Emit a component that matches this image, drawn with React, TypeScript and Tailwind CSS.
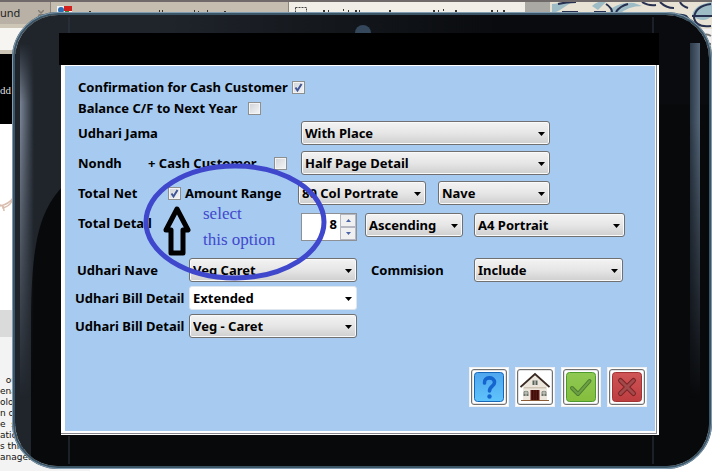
import type { ReactNode } from "react";

const selectFace =
  "block h-6 w-full appearance-none rounded-[3px] border py-0 pl-[3px] pr-5 outline-none";

function Combo({
  id,
  label,
  value,
  width,
  plain = false,
}: {
  id: string;
  label?: string;
  value: string;
  width: string;
  plain?: boolean;
}) {
  return (
    <div className={`relative shrink-0 ${width}`}>
      <select
        id={id}
        aria-label={label}
        defaultValue={value}
        className={
          plain
            ? `${selectFace} border-[#dfe6ee] bg-white`
            : `${selectFace} border-[#707070] bg-linear-to-b from-[#f3f3f3] from-0% via-[#e6e6e6] via-50% to-[#cfcfcf] shadow-[inset_0_0_0_1px_#fafafa]`
        }
      >
        <option>{value}</option>
      </select>
      <svg
        className="pointer-events-none absolute top-[11px] right-[5px]"
        width="7"
        height="4"
        viewBox="0 0 7 4"
        aria-hidden="true"
      >
        <path d="M0 0h7L3.5 4z" fill="#000" />
      </svg>
    </div>
  );
}

function Tick({ id, label, checked = false }: { id: string; label?: string; checked?: boolean }) {
  return (
    <span className="relative block size-[13px] shrink-0">
      <input
        id={id}
        aria-label={label}
        type="checkbox"
        defaultChecked={checked}
        className="peer block size-[13px] appearance-none border border-[#8e8f8f] bg-linear-to-br from-[#cfd3d8] to-[#f6f6f6] shadow-[inset_0_0_0_1px_#f4f4f4]"
      />
      <svg
        className="pointer-events-none absolute inset-0 hidden peer-checked:block"
        width="13"
        height="13"
        viewBox="0 0 13 13"
        aria-hidden="true"
      >
        <path d="M3.5 6.5l2 3L9.5 3" fill="none" stroke="#3f5598" strokeWidth="2" />
      </svg>
    </span>
  );
}

function Action({ name, children }: { name: string; children: ReactNode }) {
  return (
    <button
      type="button"
      aria-label={name}
      className="flex size-10 items-center justify-center border border-[#f0f0f0] bg-white"
    >
      <span className="flex size-9 items-center justify-center rounded-[3px] border border-[#707070] bg-[#e2e2e2]">
        <span className="flex size-8 items-center justify-center bg-white">{children}</span>
      </span>
    </button>
  );
}

function HelpIcon() {
  return (
    <svg width="30" height="30" viewBox="0 0 30 30">
      <defs>
        <linearGradient id="help-fill" x1="0" y1="0" x2="0" y2="1">
          <stop offset="0" stopColor="#4fa6ee" />
          <stop offset="1" stopColor="#5fc4fb" />
        </linearGradient>
      </defs>
      <rect x="0.5" y="0.5" width="29" height="29" rx="3" fill="url(#help-fill)" stroke="#1667b8" />
      <path
        d="M10.5 11C9.500 4.500 20.500 4 20.500 10.500C20.500 14.500 15.500 14 15.500 19"
        fill="none"
        stroke="#1565cf"
        strokeWidth="3.600"
        strokeLinecap="round"
      />
      <circle cx="15.500" cy="24.500" r="2.200" fill="#1565cf" />
    </svg>
  );
}

function HomeIcon() {
  return (
    <svg width="30" height="30" viewBox="0 0 30 30">
      <path d="M3 14L15 3l12 11v14H3z" fill="#ece6dc" />
      <path d="M4 15h22v1.500H4z" fill="#d0c5b5" />
      <path d="M0.500 15L15 2l14.500 13" fill="none" stroke="#3a2a22" strokeWidth="1.800" />
      <rect x="12.500" y="8.500" width="5" height="4.500" fill="#59645c" />
      <path d="M15 8.500v4.500" stroke="#e8e4da" />
      <rect x="10.500" y="18" width="9" height="10.500" fill="#5a1712" />
      <path d="M12.500 18v10M15 18v10M17.500 18v10" stroke="#2d0b09" strokeWidth="0.800" />
      <path d="M3.500 24v-4q2.500-2.500 5 0v4zM21.500 24v-4q2.500-2.500 5 0v4z" fill="#6b756c" />
      <path d="M6 18v6M24 18v6M3.500 21h5M21.500 21h5" stroke="#e6e2d8" strokeWidth="0.800" />
      <path d="M1 28.500h28" stroke="#8b5a34" strokeWidth="1.200" />
    </svg>
  );
}

function AcceptIcon() {
  return (
    <svg width="30" height="30" viewBox="0 0 30 30">
      <defs>
        <linearGradient id="accept-fill" x1="0" y1="0" x2="0" y2="1">
          <stop offset="0" stopColor="#8fc954" />
          <stop offset="1" stopColor="#85bd3c" />
        </linearGradient>
      </defs>
      <rect x="0.500" y="0.500" width="29" height="29" rx="3" fill="url(#accept-fill)" stroke="#4c9a2b" />
      <path d="M6 16l6 6L23.500 9" fill="none" stroke="#4a7d2e" strokeWidth="4" strokeLinecap="round" strokeLinejoin="round" />
      <path d="M6 16l6 6L23.500 9" fill="none" stroke="#6f9f45" strokeWidth="2" strokeLinecap="round" strokeLinejoin="round" />
    </svg>
  );
}

function CancelIcon() {
  return (
    <svg width="30" height="30" viewBox="0 0 30 30">
      <defs>
        <linearGradient id="cancel-fill" x1="0" y1="0" x2="0" y2="1">
          <stop offset="0" stopColor="#cf5557" />
          <stop offset="1" stopColor="#bd3d3f" />
        </linearGradient>
      </defs>
      <rect x="0.500" y="0.500" width="29" height="29" rx="3" fill="url(#cancel-fill)" stroke="#a13335" />
      <path d="M8.500 8.500l13 13M21.500 8.500l-13 13" stroke="#7f2226" strokeWidth="5" strokeLinecap="round" />
      <path d="M8.500 8.500l13 13M21.500 8.500l-13 13" stroke="#a04a4c" strokeWidth="3" strokeLinecap="round" />
    </svg>
  );
}

/* Browser window that is partly visible behind the tablet. */
function BrowserBehind() {
  return (
    <div className="absolute inset-0 flex flex-col overflow-hidden bg-white">
      <div className="h-[2px] shrink-0 bg-[#6f6a69]" />
      <div className="flex h-[22px] shrink-0 bg-[#c3baab]">
        <div className="flex w-[51px] items-center justify-between border-r border-[#8d857a] bg-[#b9b1a5] pr-[6px] text-[11px] text-[#222]">
          <span>und</span>
          <svg width="6" height="6" viewBox="0 0 6 6" aria-hidden="true">
            <path d="M0 0l6 6M6 0L0 6" stroke="#857e74" strokeWidth="1.500" />
          </svg>
        </div>
        <div className="w-[238px] border-r border-[#8d857a] bg-[#c5beb0] pt-1 pl-[6px]">
          <svg width="180" height="10" viewBox="0 0 180 10" aria-hidden="true">
            <rect width="15" height="10" fill="#f4f4f4" />
            <circle cx="4" cy="4" r="3" fill="#2c6fb5" />
            <path d="M7 0h8v5H7z" fill="#d3211d" />
            <path d="M8 5h4v4H8z" fill="#3d8c3a" />
            <path d="M32 6h2M102 5h1M105 5h1M137 5h1M141 6h1M150 5h1M167 6h2" stroke="#333" strokeWidth="2" />
          </svg>
        </div>
        <div className="w-[236px] bg-[#f1eee8] pt-[5px] pl-[6px]">
          <svg width="220" height="12" viewBox="0 0 220 12" aria-hidden="true">
            <rect x="0.500" y="0.500" width="11" height="11" fill="none" stroke="#444" strokeDasharray="2 1" />
            <path d="M28 4h2M33 4h1M48 3h1M53 4h1M60 4h2M64 4h1M94 4h2M138 4h2M143 4h1M148 3h1M160 4h2M196 4h2M202 4h1M208 4h2" stroke="#333" strokeWidth="2" />
          </svg>
        </div>
        <div className="w-[25px] bg-[#aaa9a4]" />
        <div className="grow bg-[#e5e0d2]" />
      </div>
      <div className="h-[30px] shrink-0 border-y-4 border-[#cdc5b6] bg-[#f6f5f2]" />
      <div className="flex h-[70px] shrink-0">
        <div className="w-[52px] bg-black pt-[28px] font-['Liberation_Serif',serif] text-[11px] leading-4 text-[#ddd]">
          dd
        </div>
      </div>
      <div className="h-[186px] shrink-0 bg-white pt-[74px]">
        <svg width="14" height="18" viewBox="0 0 14 18" aria-hidden="true">
          <path d="M13 0Q9 6 0 8M12 3Q9 9 2 10M0 7q4 0 4 6" fill="none" stroke="#d9bdae" strokeWidth="1.500" />
        </svg>
      </div>
      <div className="flex grow">
        <div className="w-[90px] bg-[#f3f3f3] font-['DejaVu_Sans',sans-serif] text-[9px] leading-[11px] whitespace-pre text-[#111]">
          <div className="mb-[38px] h-[27px] bg-[#dadada]" />
          <p>{"  ou"}</p>
          <p>ena</p>
          <p>olo</p>
          <p>n o</p>
          <p>{"e  s"}</p>
          <p>ation</p>
          <p>{"s thru"}</p>
          <p>anager</p>
        </div>
      </div>
    </div>
  );
}

/* Patterned wallpaper of the top right corner. */
function Wallpaper() {
  return (
    <svg className="absolute top-[2px] right-0" width="160" height="60" viewBox="20 0 160 60" aria-hidden="true">
      <rect x="20" width="160" height="60" fill="#e7e2d4" />
      <g fill="#9dbcc6">
        <path d="M20 2l20-2-12 8-8 4zM80 6q10-6 22-5l8 3q-14 0-22 8l-12 1z" />
        <path d="M138 18q8-10 18-4l2 10zM160 14q2-12 20-14v14q-8 8-20 0zM60 4q6-6 14-4l-8 8z" />
      </g>
      <g fill="none" stroke="#27304f" strokeWidth="2">
        <path d="M26 2q8-2 18-2M74 2q6 4 6 8M96 2q-8 2-12 8M128 0q6 6 14 6M138 18q6-8 16-4q4 4 4 10" />
        <path d="M179 2q-16 2-17 14q2 10 17 8M160 14h20M30 10h16M62 10h12" />
        <path d="M110 0q6 4 14 3M148 0q2 4 8 6" />
      </g>
      <rect x="156" y="27" width="24" height="18" fill="#f1f0ee" />
      <path d="M179 34q-6-4-8 2t8 6" fill="none" stroke="#777" strokeWidth="2" />
    </svg>
  );
}

/* Glass reflections on the tablet bezel. */
function Gloss() {
  return (
    <>
      <div className="absolute inset-0 bg-linear-to-r from-[#20252c] from-20% to-[#090b0e] to-70%" />
      <svg className="absolute inset-0 size-full" preserveAspectRatio="none" viewBox="0 0 694 452" aria-hidden="true">
        <path d="M16 452V300C17 230 24 200 44 176L120 90H694V452z" fill="#08090b" />
        <path d="M54 2v20M54 422v28" stroke="#303944" strokeWidth="1" />
        <path d="M638 2v20M638 422v28" stroke="#303944" strokeWidth="1" />
        <circle cx="348" cy="18" r="8" fill="#34475b" />
      </svg>
      <div className="absolute inset-y-7 left-[5px] w-[14px] bg-linear-to-r from-[#778293] to-transparent mask-t-from-85% mask-b-from-20% mask-b-to-90%" />
      <div className="absolute inset-y-7 right-[9px] w-[10px] bg-linear-to-r from-[#2c3947] to-[#56677a] mask-b-from-20% mask-b-to-90%" />
    </>
  );
}

/* Hand-drawn remark over the form. */
function Remark() {
  return (
    <div className="pointer-events-none absolute top-[97px] left-[78px] h-[121px] w-[186px] font-['Liberation_Serif',serif] text-[17px] leading-[26px] font-normal text-[#3f48cc]">
      <svg className="absolute inset-0" width="186" height="121" viewBox="0 0 186 121" aria-hidden="true">
        <ellipse cx="92" cy="59" rx="89" ry="56" fill="none" stroke="#3f48cc" strokeWidth="5" />
        <path
          d="M34 46L45 67H40V90H28V67H23z"
          fill="none"
          stroke="#000"
          strokeWidth="5"
          strokeLinejoin="round"
        />
      </svg>
      <p className="pt-[38px] pl-[60px]">
        select
        <br />
        this option
      </p>
    </div>
  );
}

export default function App() {
  return (
    <div className="relative min-h-screen overflow-hidden font-['Noto_Sans','DejaVu_Sans',sans-serif]">
      <BrowserBehind />
      <Wallpaper />
      <div className="relative mt-3 ml-3 overflow-hidden rounded-[46px] border-[3px] border-[#3c5566] pt-[18px] pr-[50px] pb-[31px] pl-11 outline-1 -outline-offset-1 outline-[#7f9bb0]">
        <Gloss />
        <div className="relative h-8 bg-black" />
        <div className="relative ml-[2px] bg-white pr-[2px] pb-px">
          <div className="border-r border-b border-[#85878c]">
            <form
              className="relative border-t border-r border-b-2 border-l-4 border-white bg-[#a6caf0] text-[13px] leading-4 font-bold text-black"
              onSubmit={(event) => event.preventDefault()}
            >
              <div className="flex flex-col pt-[13px] pr-2 pb-6 pl-[13px]">
                <div className="flex items-center">
                  <label htmlFor="confirm" className="w-[214px] whitespace-nowrap">Confirmation for Cash Customer</label>
                  <Tick id="confirm" checked />
                </div>
                <div className="mt-[5px] flex items-center">
                  <label htmlFor="balance" className="w-[170px] whitespace-nowrap">Balance C/F to Next Year</label>
                  <Tick id="balance" />
                </div>
                <div className="mt-[5px] flex items-center">
                  <label htmlFor="jama" className="w-[223px]">Udhari Jama</label>
                  <Combo id="jama" value="With Place" width="w-[249px]" />
                </div>
                <div className="mt-[6px] flex items-center">
                  <label htmlFor="nondh" className="w-[70px]">Nondh</label>
                  <label htmlFor="cash" className="w-[126px]">+ Cash Customer</label>
                  <div className="w-[27px]">
                    <Tick id="cash" />
                  </div>
                  <Combo id="nondh" value="Half Page Detail" width="w-[249px]" />
                </div>
                <div className="mt-[6px] flex items-center">
                  <label htmlFor="net" className="w-[90px]">Total Net</label>
                  <Tick id="range" checked />
                  <label htmlFor="range" className="w-[117px] pl-1">Amount Range</label>
                  <Combo id="net" value="80 Col Portrate" width="w-32" />
                  <div className="w-3" />
                  <Combo id="netside" label="Net side" value="Nave" width="w-28" />
                </div>
                <div className="mt-2 flex items-start">
                  <label htmlFor="detail" className="w-[223px] pt-[2px]">Total Detail</label>
                  <div className="flex h-7 w-14 border border-[#8d9095] bg-white">
                    <input
                      id="detail"
                      type="text"
                      defaultValue="8"
                      className="h-5 w-[38px] min-w-0 bg-white pr-[3px] text-right outline-none"
                    />
                    <div className="flex w-4 flex-col bg-[#f0f0f0]">
                      <button type="button" aria-label="Increase" className="flex flex-1 items-center justify-center border border-[#b5b8c2]">
                        <svg width="5" height="3" viewBox="0 0 5 3"><path d="M0 3h5L2.500 0z" fill="#4b63a8" /></svg>
                      </button>
                      <button type="button" aria-label="Decrease" className="flex flex-1 items-center justify-center border border-[#b5b8c2]">
                        <svg width="5" height="3" viewBox="0 0 5 3"><path d="M0 0h5L2.500 3z" fill="#4b63a8" /></svg>
                      </button>
                    </div>
                  </div>
                  <div className="w-2" />
                  <Combo id="order" label="Order" value="Ascending" width="w-[98px]" />
                  <div className="w-[11px]" />
                  <Combo id="paper" label="Paper" value="A4 Portrait" width="w-[151px]" />
                </div>
                <div className="mt-[17px] -ml-px flex items-center">
                  <label htmlFor="nave" className="w-28">Udhari Nave</label>
                  <Combo id="nave" value="Veg Caret" width="w-[168px]" />
                  <label htmlFor="commision" className="w-[117px] pl-[14px]">Commision</label>
                  <Combo id="commision" value="Include" width="w-[149px]" />
                </div>
                <div className="mt-1 -ml-[3px] flex items-center">
                  <label htmlFor="bill" className="w-[114px]">Udhari Bill Detail</label>
                  <Combo id="bill" value="Extended" width="w-[168px]" plain />
                </div>
                <div className="mt-1 -ml-[3px] flex items-center">
                  <label htmlFor="bill2" className="w-[114px]">Udhari Bill Detail</label>
                  <Combo id="bill2" value="Veg - Caret" width="w-[168px]" />
                </div>
                <div className="mt-[29px] flex justify-end gap-[6px]">
                  <Action name="Help"><HelpIcon /></Action>
                  <Action name="Home"><HomeIcon /></Action>
                  <Action name="Accept"><AcceptIcon /></Action>
                  <Action name="Cancel"><CancelIcon /></Action>
                </div>
              </div>
              <Remark />
            </form>
          </div>
        </div>
      </div>
    </div>
  );
}
